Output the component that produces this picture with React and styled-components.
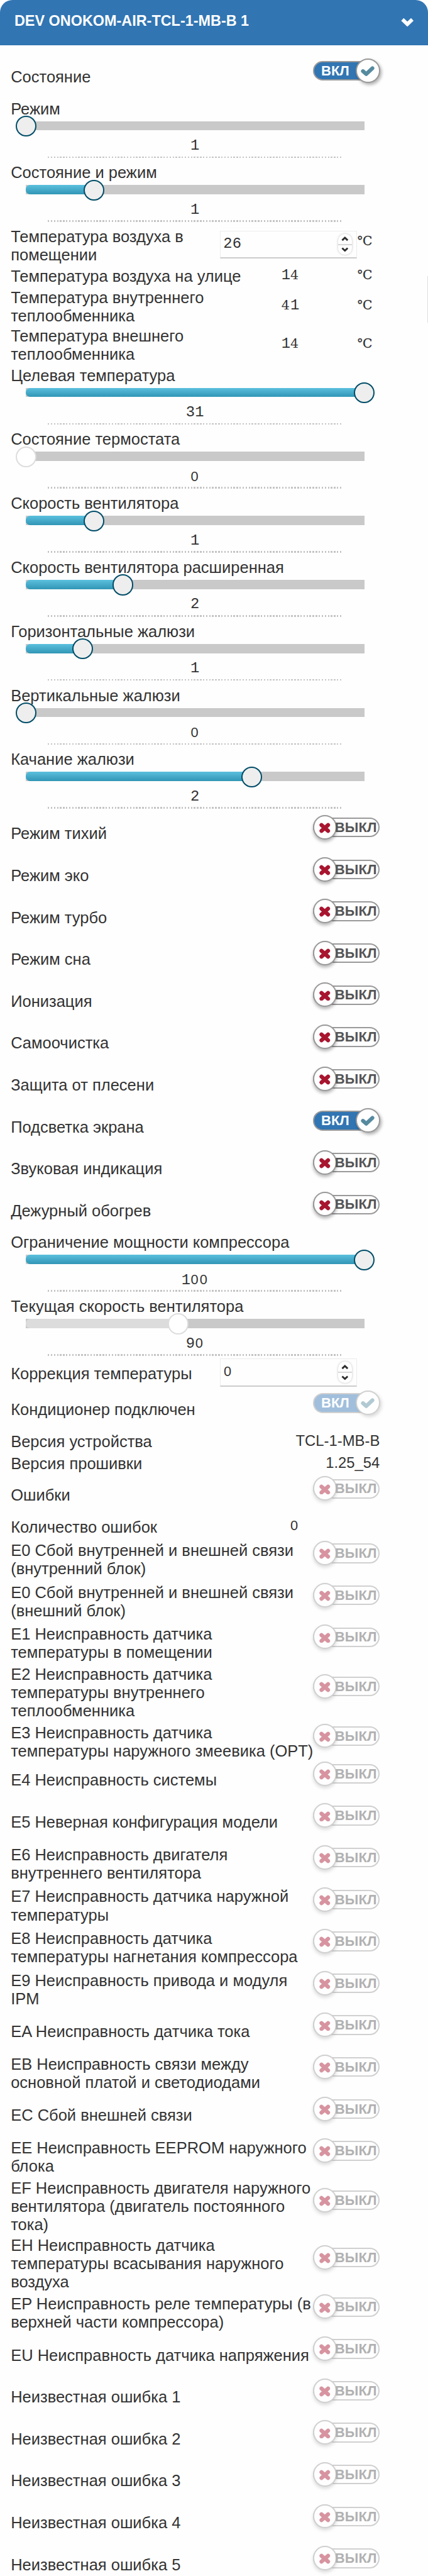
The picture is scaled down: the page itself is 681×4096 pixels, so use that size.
import React from 'react';
import styled, { createGlobalStyle, css } from 'styled-components';

// 1rem equals ten design pixels.
const GlobalStyle = createGlobalStyle`
  html { font-size: 5.8132px; }
  body {
    margin: 0;
    background: #fefefe;
    color: #333;
    font-family: "Liberation Sans", Arial, sans-serif;
  }
`;

const Panel = styled.main`
  position: relative;
  width: 100%;
  height: 704.6rem;
  overflow: hidden;
`;

const Header = styled.header`
  box-sizing: border-box;
  display: flex;
  align-items: flex-start;
  justify-content: space-between;
  height: 12.3rem;
  padding: 3.42rem 3.9rem 0 3.95rem;
  border-radius: 3.4rem 3.4rem 0 0;
  background: #3175b3;
  color: #fff;
`;

const Title = styled.h1`
  margin: 0;
  font-size: 4.03rem;
  line-height: 4.6rem;
  font-weight: 700;
  white-space: nowrap;
`;

const HeaderChevron = styled.svg`
  width: 3.5rem;
  height: 2.4rem;
  margin-top: 1.45rem;
`;

const List = styled.div`
  padding-top: 3.36rem;
`;

const Row = styled.div`
  box-sizing: border-box;
  display: flex;
  align-items: center;
  height: ${(p) => p.$height}rem;
  margin-bottom: ${(p) => p.$tuck || 0}rem;
  padding: 0 13.2rem 0.8rem 2.95rem;
`;

const Label = styled.span`
  flex: 1;
  margin-top: 0.3rem;
  font-size: 4.39rem;
  line-height: 5rem;
  white-space: pre;
`;

const Track = styled.span`
  box-sizing: border-box;
  position: relative;
  display: flex;
  align-items: center;
  justify-content: ${(p) => (p.$on ? 'flex-start' : 'flex-end')};
  flex: none;
  width: 18.2rem;
  height: 5.4rem;
  margin-bottom: 3.2rem;
  padding: ${(p) => (p.$on ? '0 0 0 1.8rem' : '0 0.5rem 0 0')};
  border: 0.4rem solid #999;
  border-radius: 2.7rem;
  background: ${(p) => (p.$on ? '#3175b3' : '#fefefe')};
  color: ${(p) => (p.$on ? '#fff' : '#555')};
  font-size: 3.8rem;
  font-weight: 700;
  line-height: 4.4rem;
  opacity: ${(p) => (p.$disabled ? 0.45 : 1)};
`;

const TrackText = styled.span`
  position: relative;
  z-index: 1;
`;

const Knob = styled.span`
  box-sizing: border-box;
  position: absolute;
  top: -1.05rem;
  display: flex;
  align-items: center;
  justify-content: center;
  height: 6.7rem;
  border: 0.4rem solid #999;
  border-radius: 50%;
  background: #fff;
  ${(p) =>
    p.$on
      ? css`
          right: -0.4rem;
          width: 6.7rem;
          box-shadow: 0.4rem 0.5rem 1rem rgba(0, 0, 0, 0.3);
        `
      : css`
          left: -0.4rem;
          width: 6.5rem;
          box-shadow: 0 0.6rem 1rem rgba(0, 0, 0, 0.28);
        `}
`;

const Mark = styled.svg`
  flex: none;
  width: 3.8rem;
  height: 2.9rem;
  margin-top: 0.4rem;
`;

const SliderBlock = styled.section`
  height: 17.51rem;
`;

const SliderLabel = styled.div`
  height: 5rem;
  padding-left: 2.95rem;
  font-size: 4.39rem;
  line-height: 5.2rem;
  white-space: nowrap;
`;

const Rail = styled.div`
  position: relative;
  height: 2.55rem;
  margin: 1.02rem 17.4rem 0 7.13rem;
  background: #c9c9c9;
`;

const Fill = styled.div`
  height: 100%;
  border-radius: 1.2rem 0 0 1.2rem;
  background: ${(p) => (p.$disabled ? '#dcdcdc' : 'linear-gradient(#5bc0de, #3196b5)')};
`;

const Handle = styled.span`
  box-sizing: border-box;
  position: absolute;
  top: -1.47rem;
  width: 5.7rem;
  height: 5.7rem;
  margin-left: -2.85rem;
  border: ${(p) => (p.$disabled ? '0.4rem solid #ddd' : '0.38rem solid #004d68')};
  border-radius: 50%;
  background: ${(p) => (p.$disabled ? '#fff' : '#eee')};
`;

const SliderValue = styled.div`
  display: flex;
  justify-content: center;
  height: 4.6rem;
  margin: 2rem 23.45rem 0 13rem;
  padding-bottom: 0.4rem;
  line-height: 4.6rem;
`;

const DottedLine = styled.div`
  height: 0.45rem;
  margin: 0.1rem 23.45rem 0 13rem;
  background: repeating-linear-gradient(90deg, #c4c4c4 0 0.417rem, transparent 0.417rem 0.833rem);
`;

const MonoText = styled.span`
  font-family: "Liberation Mono", monospace;
  font-size: 4.1rem;
`;

const Zero = styled.span`
  font-family: "Liberation Sans", sans-serif;
  font-size: 3.75rem;
  letter-spacing: 0.38rem;
  margin-left: 0.1rem;
  margin-right: -0.1rem;
`;

const Four = styled.span`
  font-family: "DejaVu Serif", serif;
  font-size: 3.55rem;
  letter-spacing: 0.2rem;
`;

const Reading = styled.span`
  flex: none;
  width: 12rem;
  margin-right: ${(p) => (p.$unit ? 15.7 : 22.1)}rem;
  margin-bottom: 0.4rem;
  text-align: right;
  font-family: "Liberation Mono", monospace;
  font-size: 4.1rem;
  line-height: 4.6rem;
`;

const Unit = styled.span`
  flex: none;
  width: 6.4rem;
  margin-right: -0.1rem;
  margin-bottom: ${(p) => p.$lift}rem;
  font-family: "DejaVu Serif", serif;
  font-size: 3.45rem;
  line-height: 4.6rem;
  letter-spacing: -0.1rem;
  -webkit-text-stroke: 0.3px #333;
  white-space: nowrap;
`;

const VersionText = styled.span`
  margin-bottom: 0.1rem;
  font-size: 4.1rem;
  line-height: 5rem;
`;

const InputBox = styled.span`
  box-sizing: border-box;
  display: flex;
  align-items: center;
  justify-content: space-between;
  flex: none;
  width: 37.4rem;
  height: 7.7rem;
  margin-right: ${(p) => (p.$unit ? 0 : 6.3)}rem;
  margin-bottom: ${(p) => p.$lift}rem;
  padding: 0 1.1rem 0 0.7rem;
  border: 1px solid #ececec;
  border-bottom: 2px solid #ccc;
  background: #fefefe;
  line-height: 4.6rem;
`;

const Stepper = styled.span`
  display: flex;
  flex-direction: column;
  align-items: center;
  justify-content: space-between;
  width: 3.9rem;
  height: 5.8rem;
  border-radius: 1.8rem;
  background: linear-gradient(transparent 47%, #d8d8d8 47% 54%, transparent 54%), #fff;
  box-shadow: 0 0 0.6rem rgba(0, 0, 0, 0.25);
`;

const StepIcon = styled.svg`
  width: 2rem;
  height: 1.3rem;
  margin: 0.8rem 0;
  transform: ${(p) => (p.$down ? 'rotate(180deg)' : 'none')};
`;

const ScrollEdge = styled.div`
  position: absolute;
  top: 75.6rem;
  right: 0;
  width: 1px;
  height: 12.6rem;
  background: #ddd;
`;

function Digits({ value }) {
  return (
    <MonoText>
      {String(value).split('').map((d, i) => {
        if (d === '0') return <Zero key={i}>0</Zero>;
        if (d === '4') return <Four key={i}>4</Four>;
        return d;
      })}
    </MonoText>
  );
}

function Toggle({ on, disabled }) {
  return (
    <Track $on={on} $disabled={disabled}>
      <TrackText>{on ? 'ВКЛ' : 'ВЫКЛ'}</TrackText>
      <Knob $on={on}>
        {on ? (
          <Mark viewBox="0 0 38 29">
            <path d="M6 14 L15 22 L32 6" fill="none" stroke="#568a9f" strokeWidth="10.5" strokeLinecap="round" strokeLinejoin="round" />
          </Mark>
        ) : (
          <Mark viewBox="0 0 38 29">
            <path d="M9.5 6.5 L27.5 22.5 M27.5 6.5 L9.5 22.5" fill="none" stroke="#a8152f" strokeWidth="11" strokeLinecap="round" />
          </Mark>
        )}
      </Knob>
    </Track>
  );
}

function ToggleRow({ label, on, disabled, height = 11.46, tuck }) {
  return (
    <Row $height={height} $tuck={tuck}>
      <Label>{label}</Label>
      <Toggle on={on} disabled={disabled} />
    </Row>
  );
}

function SliderRow({ label, value, fraction, disabled }) {
  const at = `${fraction * 100}%`;
  return (
    <SliderBlock>
      <SliderLabel>{label}</SliderLabel>
      <Rail>
        <Fill $disabled={disabled} style={{ width: at }} />
        <Handle $disabled={disabled} style={{ left: at }} />
      </Rail>
      <SliderValue><Digits value={value} /></SliderValue>
      <DottedLine />
    </SliderBlock>
  );
}

function ReadingRow({ label, value, unit, height }) {
  return (
    <Row $height={height}>
      <Label>{label}</Label>
      <Reading $unit={!!unit}><Digits value={value} /></Reading>
      {unit && <Unit $lift={0.6}>{unit}</Unit>}
    </Row>
  );
}

function NumberRow({ label, value, unit, height, lift }) {
  return (
    <Row $height={height}>
      <Label>{label}</Label>
      <InputBox $unit={!!unit} $lift={lift}>
        <Digits value={value} />
        <Stepper>
          <StepIcon viewBox="0 0 20 13"><path d="M2.5 10.5 L10 3.5 L17.5 10.5" fill="none" stroke="#2d2d2d" strokeWidth="5" /></StepIcon>
          <StepIcon $down viewBox="0 0 20 13"><path d="M2.5 10.5 L10 3.5 L17.5 10.5" fill="none" stroke="#2d2d2d" strokeWidth="5" /></StepIcon>
        </Stepper>
      </InputBox>
      {unit && <Unit $lift={2.3}>{unit}</Unit>}
    </Row>
  );
}

function VersionRow({ label, value, height }) {
  return (
    <Row $height={height}>
      <Label>{label}</Label>
      <VersionText>{value}</VersionText>
    </Row>
  );
}

const sliders = [
  ['Целевая температура', 31, 1],
  ['Состояние термостата', 0, 0, true],
  ['Скорость вентилятора', 1, 0.2],
  ['Скорость вентилятора расширенная', 2, 2 / 7],
  ['Горизонтальные жалюзи', 1, 1 / 6],
  ['Вертикальные жалюзи', 0, 0],
  ['Качание жалюзи', 2, 2 / 3],
];

const switches = [
  ['Режим тихий'],
  ['Режим эко'],
  ['Режим турбо'],
  ['Режим сна'],
  ['Ионизация'],
  ['Самоочистка'],
  ['Защита от плесени'],
  ['Подсветка экрана', true],
  ['Звуковая индикация'],
  ['Дежурный обогрев'],
];

const faults = [
  { label: 'E0 Сбой внутренней и внешней связи\n(внутренний блок)' },
  { label: 'E0 Сбой внутренней и внешней связи\n(внешний блок)' },
  { label: 'E1 Неисправность датчика\nтемпературы в помещении' },
  { label: 'E2 Неисправность датчика\nтемпературы внутреннего\nтеплообменника', height: 15.57 },
  { label: 'E3 Неисправность датчика\nтемпературы наружного змеевика (OPT)', tuck: -1.1 },
  { label: 'E4 Неисправность системы' },
  { label: 'E5 Неверная конфигурация модели' },
  { label: 'E6 Неисправность двигателя\nвнутреннего вентилятора' },
  { label: 'E7 Неисправность датчика наружной\nтемпературы' },
  { label: 'E8 Неисправность датчика\nтемпературы нагнетания компрессора' },
  { label: 'E9 Неисправность привода и модуля\nIPM' },
  { label: 'EA Неисправность датчика тока' },
  { label: 'EB Неисправность связи между\nосновной платой и светодиодами' },
  { label: 'EC Сбой внешней связи' },
  { label: 'EE Неисправность EEPROM наружного\nблока' },
  { label: 'EF Неисправность двигателя наружного\nвентилятора (двигатель постоянного\nтока)', height: 15.57 },
  { label: 'EH Неисправность датчика\nтемпературы всасывания наружного\nвоздуха', height: 15.68 },
  { label: 'EP Неисправность реле температуры (в\nверхней части компрессора)' },
  { label: 'EU Неисправность датчика напряжения' },
  { label: 'Неизвестная ошибка 1' },
  { label: 'Неизвестная ошибка 2' },
  { label: 'Неизвестная ошибка 3' },
  { label: 'Неизвестная ошибка 4' },
  { label: 'Неизвестная ошибка 5' },
];

export default function App() {
  return (
    <>
      <GlobalStyle />
      <Panel>
        <Header>
          <Title>DEV ONOKOM-AIR-TCL-1-MB-B 1</Title>
          <HeaderChevron viewBox="0 0 35 24">
            <path d="M4 5 L17.5 18 L31 5" fill="none" stroke="#fff" strokeWidth="10" />
          </HeaderChevron>
        </Header>
        <List>
          <ToggleRow label="Состояние" on />
          <SliderRow label="Режим" value={1} fraction={0} />
          <SliderRow label="Состояние и режим" value={1} fraction={0.2} />
          <NumberRow label={'Температура воздуха в\nпомещении'} value={26} unit="°C" height={10.8} lift={0.4} />
          <ReadingRow label="Температура воздуха на улице" value={14} unit="°C" height={5.92} />
          <ReadingRow label={'Температура внутреннего\nтеплообменника'} value={41} unit="°C" height={10.6} />
          <ReadingRow label={'Температура внешнего\nтеплообменника'} value={14} unit="°C" height={10.6} />
          {sliders.map(([label, value, fraction, disabled]) => (
            <SliderRow key={label} label={label} value={value} fraction={fraction} disabled={disabled} />
          ))}
          {switches.map(([label, on]) => (
            <ToggleRow key={label} label={label} on={on} />
          ))}
          <SliderRow label="Ограничение мощности компрессора" value={100} fraction={1} />
          <SliderRow label="Текущая скорость вентилятора" value={90} fraction={0.45} disabled />
          <NumberRow label="Коррекция температуры" value={0} height={7.82} lift={0.5} />
          <ToggleRow label="Кондиционер подключен" on disabled />
          <VersionRow label="Версия устройства" value="TCL-1-MB-B" height={6.13} />
          <VersionRow label="Версия прошивки" value="1.25_54" height={5.87} />
          <ToggleRow label="Ошибки" disabled />
          <ReadingRow label="Количество ошибок" value={0} height={6.22} />
          {faults.map((fault) => (
            <ToggleRow key={fault.label} disabled {...fault} />
          ))}
        </List>
        <ScrollEdge />
      </Panel>
    </>
  );
}
